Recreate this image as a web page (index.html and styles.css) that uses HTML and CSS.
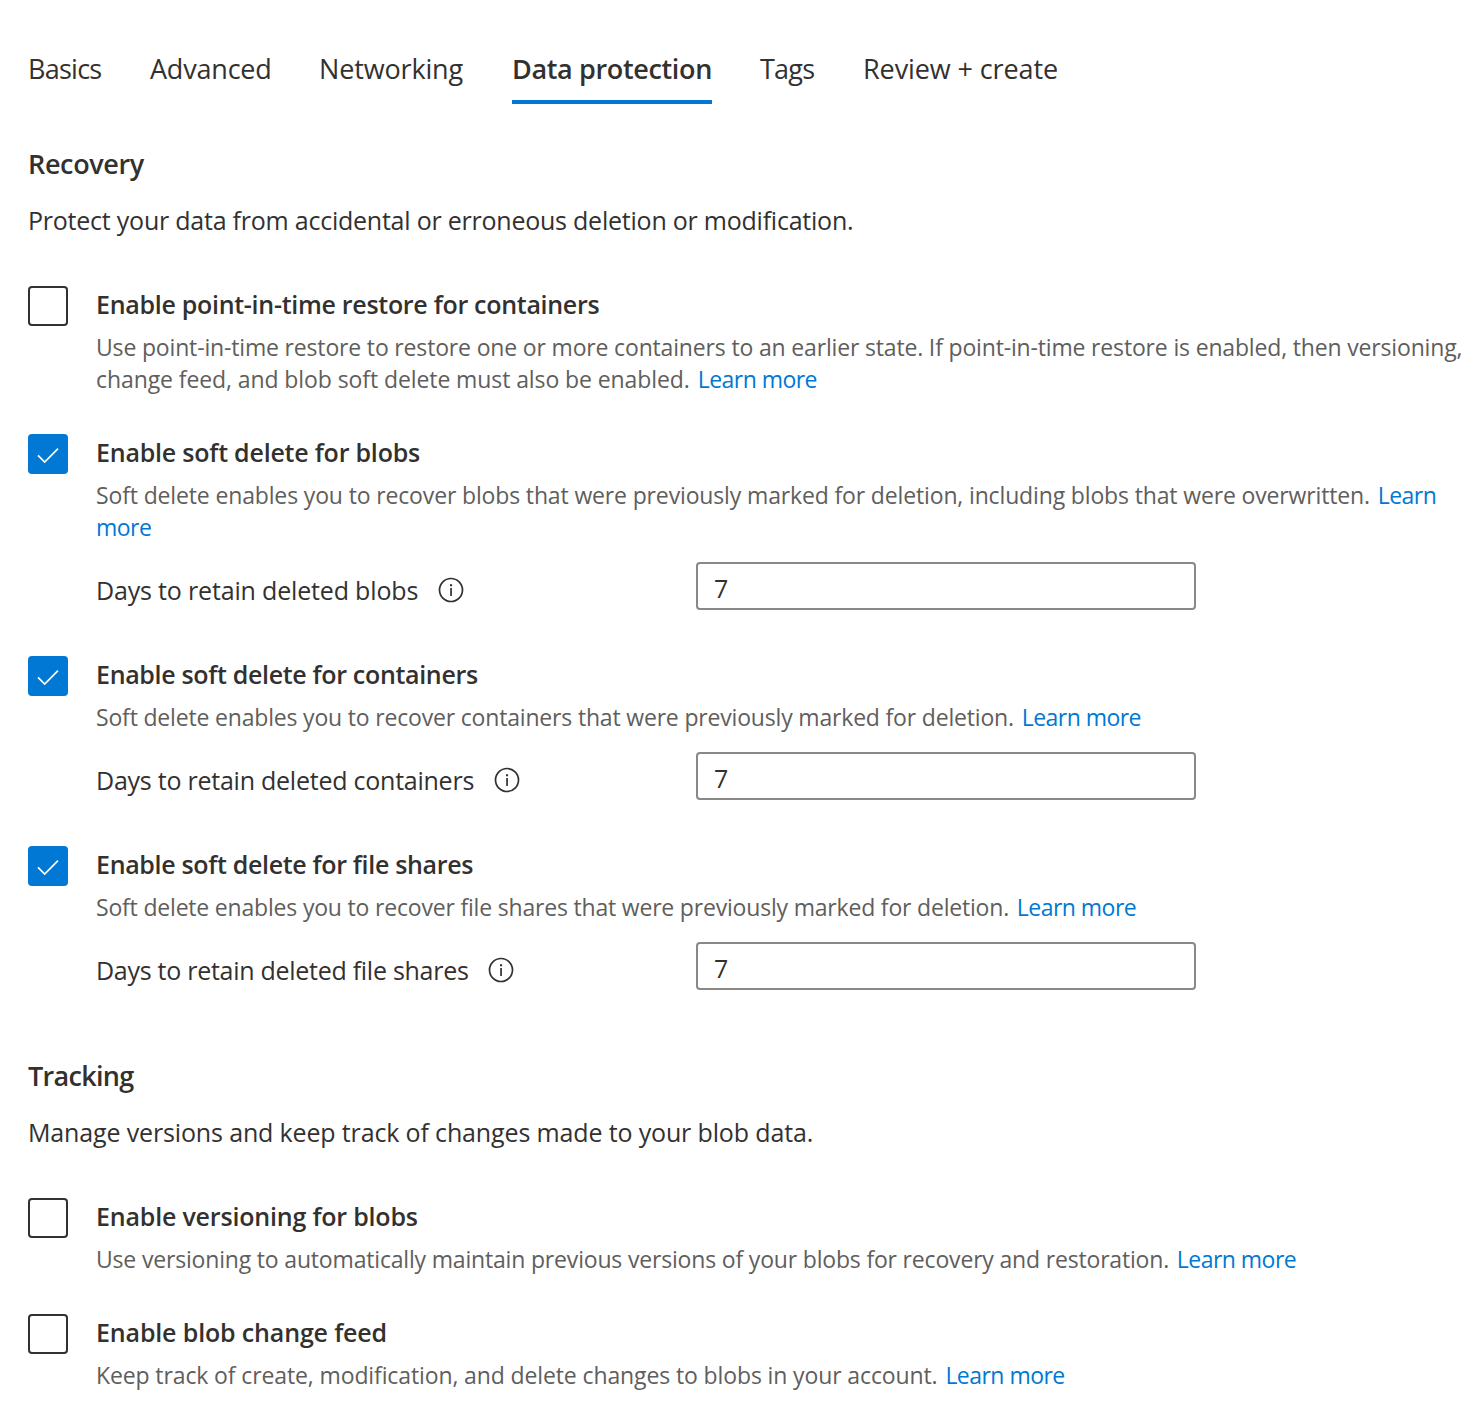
FILE: index.html
```html
<!DOCTYPE html>
<html lang="en">
<head>
<meta charset="utf-8">
<title>Create a storage account</title>
<link rel="stylesheet" href="styles.css">
</head>
<body>
<svg class="defs" aria-hidden="true">
  <symbol id="check" viewBox="0 0 40 40"><path d="M10 21.3 16.7 28 30 14.6" fill="none" stroke="currentColor" stroke-width="1.7"/></symbol>
  <symbol id="info" viewBox="0 0 26 26"><circle cx="13" cy="13" r="11.5" fill="none" stroke="currentColor" stroke-width="1.7"/><path d="M12.2 11h1.7v8h-1.7zM12 7.2h2.1v2H12z" fill="currentColor"/></symbol>
</svg>
<nav class="tabs">
  <a class="tab tab-basics">Basics</a>
  <a class="tab tab-advanced">Advanced</a>
  <a class="tab tab-networking">Networking</a>
  <a class="tab tab-protection active">Data protection</a>
  <a class="tab tab-tags">Tags</a>
  <a class="tab tab-review">Review + create</a>
</nav>

<section class="section">
  <h2 class="heading">Recovery</h2>
  <p class="intro">Protect your data from accidental or erroneous deletion or modification.</p>

  <div class="option restore">
    <span class="box"></span>
    <div class="body">
      <h3 class="title">Enable point-in-time restore for containers</h3>
      <p class="desc">Use point-in-time restore to restore one or more containers to an earlier state. If point-in-time restore is enabled, then versioning,<br><span class="second">change feed, and blob soft delete must also be enabled. </span><a class="link">Learn more</a></p>
    </div>
  </div>

  <div class="option blobs">
    <span class="box checked"><svg><use href="#check"/></svg></span>
    <div class="body">
      <h3 class="title">Enable soft delete for blobs</h3>
      <p class="desc">Soft delete enables you to recover blobs that were previously marked for deletion, including blobs that were overwritten. <a class="link">Learn<br>more</a></p>
      <div class="field">
        <label class="label">Days to retain deleted blobs</label>
        <svg class="info"><use href="#info"/></svg>
        <div class="input">7</div>
      </div>
    </div>
  </div>

  <div class="option containers">
    <span class="box checked"><svg><use href="#check"/></svg></span>
    <div class="body">
      <h3 class="title">Enable soft delete for containers</h3>
      <p class="desc">Soft delete enables you to recover containers that were previously marked for deletion. <a class="link">Learn more</a></p>
      <div class="field">
        <label class="label">Days to retain deleted containers</label>
        <svg class="info"><use href="#info"/></svg>
        <div class="input">7</div>
      </div>
    </div>
  </div>

  <div class="option shares">
    <span class="box checked"><svg><use href="#check"/></svg></span>
    <div class="body">
      <h3 class="title">Enable soft delete for file shares</h3>
      <p class="desc">Soft delete enables you to recover file shares that were previously marked for deletion. <a class="link">Learn more</a></p>
      <div class="field">
        <label class="label">Days to retain deleted file shares</label>
        <svg class="info"><use href="#info"/></svg>
        <div class="input">7</div>
      </div>
    </div>
  </div>
</section>

<section class="section tracking">
  <h2 class="heading">Tracking</h2>
  <p class="intro">Manage versions and keep track of changes made to your blob data.</p>

  <div class="option versioning">
    <span class="box"></span>
    <div class="body">
      <h3 class="title">Enable versioning for blobs</h3>
      <p class="desc">Use versioning to automatically maintain previous versions of your blobs for recovery and restoration. <a class="link">Learn more</a></p>
    </div>
  </div>

  <div class="option feed">
    <span class="box"></span>
    <div class="body">
      <h3 class="title">Enable blob change feed</h3>
      <p class="desc">Keep track of create, modification, and delete changes to blobs in your account. <a class="link">Learn more</a></p>
    </div>
  </div>
</section>
</body>
</html>
```

FILE: styles.css
```css
* { box-sizing: border-box; }
body {
  margin: 0;
  padding: 50px 0 0 28px;
  overflow: hidden;
  background: #fff;
  color: #323130;
  font-family: "Open Sans", "Segoe UI", sans-serif;
  font-size: 25px;
  white-space: nowrap;
}
h2, h3, p { margin: 0; }
.defs { display: none; }

.tabs { display: flex; gap: 48px; font-size: 27px; line-height: 37px; }
.tab { padding-bottom: 13px; border-bottom: 4px solid transparent; }
.tab.active { border-color: #0078d4; font-weight: 600; }
.tab-basics { width: 74px; letter-spacing: -0.75px; }
.tab-advanced { width: 121px; letter-spacing: -0.2px; }
.tab-networking { width: 145px; letter-spacing: -0.15px; }
.tab-protection { width: 200px; letter-spacing: -0.35px; }
.tab-tags { width: 55px; letter-spacing: -0.8px; }
.tab-review { letter-spacing: -0.1px; }

.section { padding-top: 42px; }
.section.tracking { padding-top: 68px; }
.heading { font-size: 27px; line-height: 35px; font-weight: 600; letter-spacing: -0.35px; }
.tracking .heading { letter-spacing: -0.7px; }
.intro { margin: 22px 0 49px; line-height: 34px; letter-spacing: -0.23px; }
.tracking .intro { letter-spacing: -0.145px; }

.option { display: flex; gap: 28px; }
.option + .option { margin-top: 39px; }
.blobs + .option, .containers + .option { margin-top: 46px; }
.box {
  flex: none;
  width: 40px;
  height: 40px;
  border: 2px solid #323130;
  border-radius: 4px;
}
.box.checked { border: 0; background: #0078d4; color: #fff; }
.box svg { display: block; width: 40px; height: 40px; }
.body { padding-top: 2px; }
.title { font-size: 25px; line-height: 32px; font-weight: 600; }
.desc { margin-top: 11px; font-size: 23px; line-height: 32px; color: #605e5c; }
.link { margin-left: 2px; color: #0078d4; }

.restore .title { letter-spacing: -0.29px; }
.restore .desc { letter-spacing: -0.165px; }
.restore .second { letter-spacing: -0.09px; }
.blobs .title { letter-spacing: -0.21px; }
.blobs .desc { letter-spacing: -0.145px; }
.containers .title { letter-spacing: -0.325px; }
.containers .desc { letter-spacing: -0.18px; }
.shares .title { letter-spacing: -0.325px; }
.shares .desc { letter-spacing: -0.19px; }
.versioning .title { letter-spacing: -0.19px; }
.versioning .desc { letter-spacing: -0.178px; }
.feed .title { letter-spacing: -0.15px; }
.feed .desc { letter-spacing: -0.118px; }
.desc .link { letter-spacing: -0.53px; }

.field { display: flex; align-items: flex-start; width: 1100px; margin-top: 19px; }
.label { margin-top: 12px; line-height: 32px; }
.blobs .label { letter-spacing: -0.17px; }
.containers .label { letter-spacing: -0.24px; }
.shares .label { letter-spacing: -0.275px; }
.info { flex: none; width: 26px; height: 26px; margin: 15px 0 0 19.5px; }
.input {
  width: 500px;
  height: 48px;
  margin-left: auto;
  padding: 0 16px;
  border: 2px solid #8a8886;
  border-radius: 4px;
  line-height: 48px;
}
```
